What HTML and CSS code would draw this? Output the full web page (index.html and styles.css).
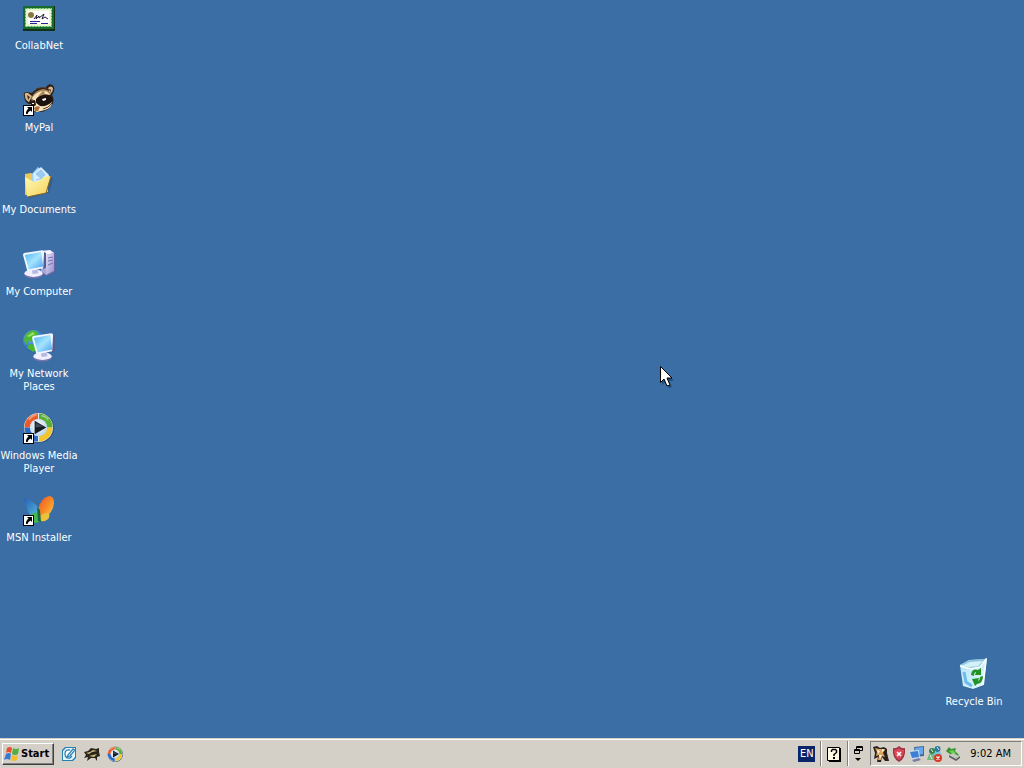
FILE: index.html
```html
<!DOCTYPE html>
<html lang="en">
<head>
<meta charset="utf-8">
<title>Desktop</title>
<link rel="stylesheet" href="styles.css">
</head>
<body>
<svg class="defs" aria-hidden="true">
  <defs>
    <linearGradient id="screen" x1="0" y1="0" x2="1" y2="1"><stop offset="0" stop-color="#4fb4f4"/><stop offset=".5" stop-color="#a4e4fc"/><stop offset="1" stop-color="#4a9ff0"/></linearGradient>
    <linearGradient id="case" x1="0" y1="0" x2="1" y2="1"><stop offset="0" stop-color="#e4e2fa"/><stop offset="1" stop-color="#8f8cc4"/></linearGradient>
    <linearGradient id="folder" x1="0" y1="0" x2="1" y2="1"><stop offset="0" stop-color="#fffbb5"/><stop offset="1" stop-color="#f3cf58"/></linearGradient>
    <linearGradient id="wing" x1="0" y1="0" x2="1" y2="1"><stop offset="0" stop-color="#ef4c25"/><stop offset=".5" stop-color="#f78a27"/><stop offset="1" stop-color="#fbd34a"/></linearGradient>
    <linearGradient id="wingBlue" x1="0" y1="0" x2="1" y2="1"><stop offset="0" stop-color="#2360b4"/><stop offset="1" stop-color="#58bde0"/></linearGradient>
    <linearGradient id="bin" x1="0" y1="0" x2="1" y2="1"><stop offset="0" stop-color="#b5e3fa"/><stop offset=".5" stop-color="#c9eefb"/><stop offset="1" stop-color="#e9fafc"/></linearGradient>
    <radialGradient id="globe" cx=".35" cy=".3" r=".8"><stop offset="0" stop-color="#6cc2f8"/><stop offset="1" stop-color="#1448a8"/></radialGradient>
    <radialGradient id="disc" cx=".45" cy=".4" r=".6"><stop offset="0" stop-color="#fff"/><stop offset="1" stop-color="#b9d4ea"/></radialGradient>
    <symbol id="arrow" viewBox="0 0 11 11"><path d="M0 0h11v11H0z" fill="#000"/><path d="M1 1h9v9H1z" fill="#fff"/><path d="M4 2h5v5L7.500 5.500Q5 6.500 4.500 9H3Q2.500 6 5.500 3.500z" fill="#000"/></symbol>
    <symbol id="raccoon" viewBox="0 0 32 32">
      <path d="M1 12Q0 8 4 8l5 1Q14 3 22 4L25 1q4-2 6 2 1 4-2 8 3 5 0 10-5 7-12 7Q6 29 7 20 2 20 1 12z" fill="#2c2018"/>
      <path d="M2 12q-1-4 3-3l4 3-3 6Q2 16 2 12zM25 4q3-3 5 0 0 4-3 6z" fill="#d9b98b"/>
      <path d="M4 11l3 2-2 3zM27 5l1 1-1 3z" fill="#45301f"/>
      <path d="M8 14Q12 6 20 5q6 0 8 6-5-2-9 1l-5 7-5-1z" fill="#a98558"/>
      <path d="M9 14q4-6 11-7l-4 4-4 7zM21 7q4 0 6 4l-5-1z" fill="#f6e2bd"/>
      <path d="M13 15q6-6 13-3l4 3q-4 7-12 7l-5-3z" fill="#1b130f"/>
      <path d="M7 19l5-1 5 4q7 1 12-4 0 6-7 8l-8 2q-7-2-7-9z" fill="#f8e5c2"/>
      <path d="M7 17l5-1 1 5-3 2-3-3z" fill="#2a1a12"/>
      <path d="M19 15l4-1v2l-3 1zM9 19h2v1H9z" fill="#fff"/>
      <path d="M11 24q3-3 6-1l-2 4h-3z" fill="#a97039"/>
      <path d="M20 25q6-1 9-6M13 5q8-3 14 1" fill="none" stroke="#5b3517"/>
    </symbol>
    <symbol id="player" viewBox="0 0 32 32">
      <circle cx="16.500" cy="16.500" r="15.500" fill="#35506f"/><circle cx="16" cy="16" r="15" fill="#e8edf0"/>
      <path d="M15.500 16V1.500A14.500 14.500 0 0 0 1.500 16z" fill="#ec5926"/><path d="M16.500 16V1.500a14.500 14.500 0 0 1 14 14.500z" fill="#58ad35"/>
      <path d="M15.500 16h-14a14.500 14.500 0 0 0 14 14.500z" fill="#2868c7"/><path d="M16.500 16h14a14.500 14.500 0 0 1-14 14.500z" fill="#f3c52b"/>
      <path d="M6 8q4-5 8-5M19 4q4 0 7 4" fill="none" stroke="#fff" stroke-opacity=".4" stroke-width="2"/>
      <circle cx="16" cy="16" r="9" fill="url(#disc)"/><path d="M12 9L24 16 12 23z" fill="#171c24"/><path d="M13 11l8 4-8 1z" fill="#424c58"/>
    </symbol>
    <symbol id="monitor" viewBox="0 0 24 30">
      <ellipse cx="11" cy="25" rx="10" ry="4.500" fill="#7773ac"/><ellipse cx="11" cy="24" rx="9.500" ry="4" fill="#eeefff"/>
      <path d="M9 19l6-1 1 6-6 1z" fill="#b9b8df"/><path d="M1 3L20 0q2 0 2 2l1 15q0 2-2 2L6 22q-2 0-2-2L0 5q0-1 1-2z" fill="#eef5fc"/>
      <path d="M2 5l17-3 2 15-15 3z" fill="url(#screen)"/><path d="M22 2l2 1v15l-3 2z" fill="#535c93"/>
    </symbol>
  </defs>
</svg>
<main class="desktop">
  <div class="icons">
    <button class="shortcut"><svg class="icon" viewBox="0 0 32 32"><path d="M0 4h32v25H0z" fill="#123018"/><path d="M0 4h31v23H0z" fill="#176a2d"/><path d="M2 6h27v19H2z" fill="#e9f7d1"/><path d="M2.500 6.500h26v18h-26z" fill="none" stroke="#3fa550" stroke-width="1" stroke-dasharray="2 1"/><path d="M5 9h21v13H5z" fill="#fff"/><circle cx="8" cy="13" r="3" fill="#88783d"/><path d="M11 17l3-4-1 4 3-3v2l5-4-2 5 3-2 3 2" fill="none" stroke="#211930"/><path d="M7 19.500h10M7 21.500h7M18 21.500h7" stroke="#29209b"/></svg><span class="label">CollabNet</span></button>
    <button class="shortcut"><svg class="icon" viewBox="0 0 32 32"><use href="#raccoon" width="32" height="32"/><use href="#arrow" y="21" width="11" height="11"/></svg><span class="label">MyPal</span></button>
    <button class="shortcut"><svg class="icon" viewBox="0 0 32 32"><path d="M3 10l8-2 15 1 4 4-4 14-20 5z" fill="#294d72" opacity=".5"/><path d="M2 8l6-1 3 2 13-1 1 18L2 29z" fill="#efc65c"/><path d="M8 9l7-8 11 9-5 15-11 1z" fill="#9ed0f5"/><path d="M10 8l8-7 8 8-4 15-10 1z" fill="#d8eeff"/><path d="M13 8l5-4 4 5-4 3zM13 14l7-2M13 17l6-2" fill="#9bcbf2" stroke="#8fc0ea"/><path d="M2 11l9 5 5-1 5-4 7-1-5 17-19 4z" fill="url(#folder)"/><path d="M28 10l-5 17-19 4" fill="none" stroke="#8c661f"/></svg><span class="label">My Documents</span></button>
    <button class="shortcut"><svg class="icon" viewBox="0 0 32 32"><path d="M18 3l9-1 5 3v19l-8 4-6-4z" fill="#6764a5"/><path d="M18 3l9-1 4 3-8 2z" fill="#f4f4ff"/><path d="M18 4l5 3v20l-5-4z" fill="#aaa6dc"/><path d="M23 7l8-2v18l-8 4z" fill="url(#case)"/><path d="M25 10l5-1M25 13l5-1M25 17l5-2" stroke="#7871b9"/><use href="#monitor" y="2" width="23" height="29"/></svg><span class="label">My Computer</span></button>
    <button class="shortcut"><svg class="icon" viewBox="0 0 32 32"><circle cx="11" cy="11" r="11" fill="url(#globe)"/><path d="M2 6Q7-1 13 1l3 3-5 3-2 5-4-1-2 4-2-5zM6 14l6 1 2 5-4 2-6-4z" fill="#4db72f"/><path d="M4 6l6-4 2 2-6 3z" fill="#9ae066"/><use href="#monitor" x="9" y="2" width="23" height="31"/></svg><span class="label">My Network Places</span></button>
    <button class="shortcut"><svg class="icon" viewBox="0 0 32 32"><use href="#player" width="31" height="31"/><use href="#arrow" y="21" width="11" height="11"/></svg><span class="label">Windows Media Player</span></button>
    <button class="shortcut"><svg class="icon" viewBox="0 0 32 32"><path d="M0 5q9-1 16 10l1 8-9-1Q4 18 4 13z" fill="url(#wingBlue)"/><path d="M15 17Q17 4 26 2q5 0 5 7-1 12-14 16z" fill="url(#wing)"/><path d="M8 20l8-2 1 9q-5 4-8 0z" fill="#44b551"/><path d="M17 22q6-4 9-3 2 5-4 8-4 1-6-1z" fill="#eac13d"/><path d="M14 13l3 3 1 12-3-1z" fill="#176b3f"/><use href="#arrow" y="21" width="11" height="11"/></svg><span class="label">MSN Installer</span></button>
  </div>
  <button class="shortcut"><svg class="icon" viewBox="0 0 32 32"><path d="M3 7l26-5-3 26-12 4-8-4z" fill="#1d4976" opacity=".4"/><path d="M2 7l9-5 18-1-3 26-11 4-10-3z" fill="url(#bin)"/><path d="M2 7l10-5 16-1-6 8-9 1z" fill="#8fc5df"/><path d="M3 8l9-4 13-1-5 5-8 1z" fill="#d2f1f8"/><path d="M2 8l11 3 9-2 6-8-3 25" fill="none" stroke="#f8ffff" stroke-width="1.500"/><path d="M6 14l2 10 6 4" fill="none" stroke="#6dbbec" stroke-width="3"/><path d="M13 17q1-7 7-5l3-2v7h-6l1-3q-2 0-2 4zM25 18q0 7-6 8l-2 2-3-7 7-1-1 3q2-1 2-4z" fill="#259324"/></svg><span class="label">Recycle Bin</span></button>
  <svg class="cursor" viewBox="0 0 14 22" aria-hidden="true"><path d="M2 2l12 13H9l3 6-3 1-3-6-4 3z" fill="#173b63" opacity=".6"/><path d="M.5 .5v16L4 13l3 7 3-1-3-7h5z" fill="#fff" stroke="#000"/></svg>
</main>
<footer class="taskbar">
  <button class="start"><svg class="flag" viewBox="0 0 16 16"><path d="M3 2q3-2 5 0L7 7q-3-2-5 0z" fill="#e8502d"/><path d="M9 2q3 2 6 0l-1 6q-3 2-6 0z" fill="#55ae3c"/><path d="M2 8q3-2 5 0l-1 6q-3-2-6 0z" fill="#3978d3"/><path d="M8 9q3 2 6 0l-1 5q-3 2-6 0z" fill="#f3be2b"/></svg>Start</button>
  <nav class="quick" aria-label="Quick launch">
    <button class="tool" aria-label="Show desktop"><svg class="small" viewBox="0 0 16 16"><path d="M4 1h11v11l-3 3H1V4z" fill="#277eb1"/><path d="M5 2h9v9l-3 3H2V5z" fill="#e4f6fb"/><path d="M9 4Q4 3 4 8t5 4l2-2M7 9l5-6 2 1-5 6-3 1z" fill="#fff" stroke="#2b82b7" stroke-width="1.300"/></svg></button>
    <button class="tool" aria-label="MyPal"><svg class="small" viewBox="0 0 16 16"><path d="M0 6l4-1 3-3 5 1 3-1v4l1 4-3 1v4l-2-3H7l-4 3 1-4-4 1 2-3z" fill="#29251a"/><path d="M2 7l4-1 3-2 4 1-5 1-3 2zM5 10l8-2-3 3z" fill="#d2bd83"/></svg></button>
    <button class="tool" aria-label="Windows Media Player"><svg class="small"><use href="#player" width="16" height="16"/></svg></button>
  </nav>
  <div class="lang"><button class="language" aria-label="English">EN</button></div>
  <div class="help"><button class="tool" aria-label="Help"><svg class="small" viewBox="0 0 16 16"><path d="M3 2h12v14H3z" fill="#000"/><path d="M1.500 1.500h12v13h-12z" fill="#fffce5" stroke="#000"/><path d="M5.500 6V4.500l1-1h3l1 1v2L8 8.500V10" fill="none" stroke="#000" stroke-width="1.500"/><path d="M7 11h2v2H7z"/></svg></button></div>
  <button class="tool options" aria-label="Language bar options"><svg class="small" viewBox="0 0 16 16"><path d="M6.500 3V.5h6v4H10M6 1.500h7M4 4.500h6" fill="none" stroke="#000"/><path d="M4.500 3.500h5v4h-5z" fill="none" stroke="#000"/><path d="M5 12h6l-3 3z"/></svg></button>
  <div class="tray">
    <button class="tool" aria-label="MyPal status"><svg class="small" viewBox="0 0 16 16"><path d="M0 1l4-1 3 2 4-1 3 2v4l2 8h-4l-3-4-1 5H4l1-5-4 2 1-6z" fill="#2c2119"/><path d="M2 2l4 1 6 0-2 4 2 4-3-1-1 4H5l1-5-3 1 1-4z" fill="#dba765"/><path d="M4 4l3 1-2 3zM9 3l3 1-3 2zM6 9l3 0-2 4z" fill="#fff0d0"/></svg></button>
    <button class="tool" aria-label="Security alert"><svg class="small" viewBox="0 0 16 16"><path d="M8 0q3 3 6 2 1 10-6 14Q1 12 2 2q3 1 6-2z" fill="#9b3342"/><path d="M8 2q2 2 5 2 0 7-5 10-5-3-5-10 3 0 5-2z" fill="#d94758"/><path d="M6 6l4 4m0-4l-4 4" stroke="#fff" stroke-width="1.500"/></svg></button>
    <button class="tool" aria-label="Network"><svg class="small" viewBox="0 0 16 16"><path d="M5 1l10-1v10l-9 1z" fill="#456894"/><path d="M6 2l8-1v7l-7 1z" fill="#65a8ed"/><path d="M0 5l10-1 1 8-9 1z" fill="#c7dcf4"/><path d="M1 6l8-1 1 6-7 1z" fill="#3d7fd4"/><path d="M3 14l7-2 2 2-7 2z" fill="#777ca8"/></svg></button>
    <button class="tool" aria-label="Messenger, signed out"><svg class="small" viewBox="0 0 16 16"><circle cx="10.500" cy="3" r="3" fill="#2778a5"/><path d="M7 6h6q3 3 1 8H7z" fill="#72c6d2"/><circle cx="5" cy="5" r="3" fill="#347d51"/><path d="M2 8h5l2 6H0z" fill="#75b584"/><path d="M4 3l2 3M10 1l2 3M3 9l2 4" stroke="#dff0de"/><circle cx="11" cy="12" r="4" fill="#d83823"/><path d="M9.500 10.500l3 3m0-3l-3 3" stroke="#fff" stroke-width="1.300"/></svg></button>
    <button class="tool" aria-label="Safely remove hardware"><svg class="small" viewBox="0 0 16 16"><path d="M1 5l3-4 2 2 5-1-1 3 4 4-3 3-9-6z" fill="#35952e"/><path d="M4 5l4-1 3 3-3 2z" fill="#70ce4e"/><path d="M4 9l7 4 4-3v2l-4 3-7-4z" fill="#5d6060"/><path d="M5 9l6 3 3-2-6-3z" fill="#c4c8c0"/></svg></button>
    <time class="clock" datetime="09:02">9:02 AM</time>
  </div>
</footer>
</body>
</html>
```
FILE: styles.css
```css
* { box-sizing: border-box; }
body { margin: 0; min-height: 100vh; display: flex; flex-direction: column; background: #3b6ea5; font: 11px/13px "DejaVu Sans Condensed", "DejaVu Sans", sans-serif; }
button { font: inherit; padding: 0; border: 0; background: none; color: inherit; }
svg { display: block; flex: none; }
.defs { position: absolute; width: 0; height: 0; }
.desktop { position: relative; flex: 1; display: flex; justify-content: space-between; align-items: flex-end; padding-right: 11px; }
.icons { align-self: flex-start; display: flex; flex-direction: column; }
.shortcut { width: 78px; height: 82px; display: flex; flex-direction: column; align-items: center; gap: 5px; padding-top: 2px; color: #fff; }
.icon { width: 32px; height: 32px; }
.label { text-align: center; margin: 0 -4px; }
.cursor { position: absolute; left: 660px; top: 366px; width: 14px; height: 22px; }
.taskbar { display: flex; align-items: center; height: 30px; padding: 1px 2px; background: #d4d0c8; border-top: 1px solid #d4d0c8; box-shadow: inset 0 1px #fff; color: #000; }
.start { display: flex; align-items: center; gap: 1px; height: 22px; width: 52px; padding-left: 1px; border: 1px solid; border-color: #fff #404040 #404040 #fff; box-shadow: inset -1px -1px #808080; font-weight: bold; }
.flag, .small { width: 16px; height: 16px; }
.quick { display: flex; gap: 7px; margin-left: 7px; margin-right: auto; }
.lang, .help { display: flex; align-items: center; height: 25px; padding: 0 5px; border-right: 1px solid #808080; box-shadow: 1px 0 #fff; }
.language { width: 17px; height: 16px; background: #0a246a; color: #fff; }
.options { margin: 0 4px 0 2px; }
.tray { display: flex; align-items: center; gap: 2px; height: 25px; padding: 0 10px 0 2px; border: 1px solid; border-color: #808080 #fff #fff #808080; }
.clock { margin-left: 7px; white-space: nowrap; }
```
